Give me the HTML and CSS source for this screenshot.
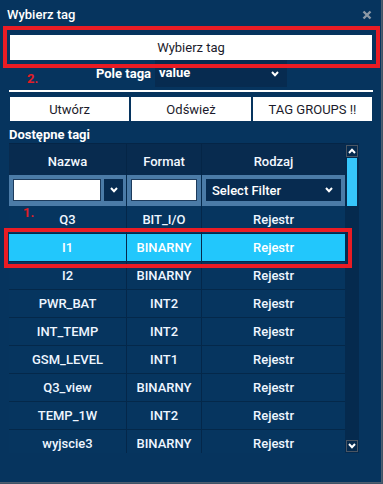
FILE: index.html
```html
<!DOCTYPE html>
<html lang="pl">
<head>
<meta charset="utf-8">
<title>Wybierz tag</title>
<link rel="stylesheet" href="styles.css">
</head>
<body>
<div class="window">
  <div class="titlebar">
    <span class="title">Wybierz tag</span>
    <svg class="close" width="10" height="10" viewBox="0 0 10 10"><path d="M1.5 1.5 L8.5 8.5 M8.5 1.5 L1.5 8.5" stroke="#8c99a6" stroke-width="2.4" fill="none"/></svg>
  </div>
  <div class="content">
    <button class="btn choose">Wybierz tag</button>
    <div class="field">
      <span class="field-label">Pole taga</span>
      <div class="select value-select"><span>value</span>
        <svg class="chev" width="8" height="6" viewBox="0 0 8 6"><path d="M1 1 L4 4.2 L7 1" stroke="#fff" stroke-width="2" fill="none"/></svg>
      </div>
    </div>
    <div class="rule"></div>
    <div class="actions">
      <button class="btn">Utwórz</button>
      <button class="btn">Odśwież</button>
      <button class="btn">TAG GROUPS !!</button>
    </div>
    <div class="section-label">Dostępne tagi</div>
    <div class="grid-wrap">
      <div class="grid">
        <div class="row head">
          <div class="cell">Nazwa</div>
          <div class="cell">Format</div>
          <div class="cell">Rodzaj</div>
        </div>
        <div class="row filter">
          <div class="cell combo">
            <div class="input wide"></div>
            <div class="combo-btn"><svg width="8" height="6" viewBox="0 0 8 6"><path d="M1 1 L4 4.2 L7 1" stroke="#fff" stroke-width="2" fill="none"/></svg></div>
          </div>
          <div class="cell"><div class="input"></div></div>
          <div class="cell">
            <div class="select filter-select"><span>Select Filter</span>
              <svg class="chev" width="8" height="6" viewBox="0 0 8 6"><path d="M1 1 L4 4.2 L7 1" stroke="#fff" stroke-width="2" fill="none"/></svg>
            </div>
          </div>
        </div>
        <div class="body">
          <div class="row data"><div class="cell">Q3</div><div class="cell">BIT_I/O</div><div class="cell">Rejestr</div></div>
          <div class="row data selected"><div class="cell">I1</div><div class="cell">BINARNY</div><div class="cell">Rejestr</div></div>
          <div class="row data"><div class="cell">I2</div><div class="cell">BINARNY</div><div class="cell">Rejestr</div></div>
          <div class="row data"><div class="cell">PWR_BAT</div><div class="cell">INT2</div><div class="cell">Rejestr</div></div>
          <div class="row data"><div class="cell">INT_TEMP</div><div class="cell">INT2</div><div class="cell">Rejestr</div></div>
          <div class="row data"><div class="cell">GSM_LEVEL</div><div class="cell">INT1</div><div class="cell">Rejestr</div></div>
          <div class="row data"><div class="cell">Q3_view</div><div class="cell">BINARNY</div><div class="cell">Rejestr</div></div>
          <div class="row data"><div class="cell">TEMP_1W</div><div class="cell">INT2</div><div class="cell">Rejestr</div></div>
          <div class="row data"><div class="cell">wyjscie3</div><div class="cell">BINARNY</div><div class="cell">Rejestr</div></div>
        </div>
      </div>
      <div class="scrollbar">
        <div class="sb-arrow"><svg width="8" height="6" viewBox="0 0 8 6"><path d="M1 5 L4 1.8 L7 5" stroke="#fff" stroke-width="2" fill="none"/></svg></div>
        <div class="sb-thumb"></div>
        <div class="sb-space"></div>
        <div class="sb-arrow"><svg width="8" height="6" viewBox="0 0 8 6"><path d="M1 1 L4 4.2 L7 1" stroke="#fff" stroke-width="2" fill="none"/></svg></div>
      </div>
    </div>
  </div>

  <div class="mark mark-top"></div>
  <div class="mark mark-row"></div>
  <span class="mark-num num-2">2.</span>
  <span class="mark-num num-1">1.</span>
</div>
</body>
</html>
```

FILE: styles.css
```css
* { box-sizing: border-box; }
html, body { margin: 0; padding: 0; background: #3f5366; }
body { font-family: Roboto, "Noto Sans", Arial, sans-serif; font-size: 13px; }

.window {
  position: relative;
  width: 382px;
  height: 483px;
  background: #06345e;
  border-right: 1px solid #4d5e70;
  border-bottom: 1px solid #4d5e70;
  overflow: hidden;
}

.titlebar {
  height: 26px;
  display: flex;
  align-items: flex-start;
  justify-content: space-between;
  padding: 7px 9px 0 7px;
}
.title { color: #fff; font-size: 13px; font-weight: 500; line-height: 15px; }
.close { margin-top: 3px; }

.content { padding: 0 9px 0 9px; }

.btn {
  font-family: Roboto, "Noto Sans", Arial, sans-serif;
  font-size: 13px;
  color: #1b1b2b;
  background: #fff;
  border: 0;
  padding: 0;
  margin: 0;
  line-height: 15px;
}
.choose {
  display: block;
  width: 362px;
  height: 25px;
  margin: 9px 0 0 1px;
}

.field {
  height: 27px;
  display: flex;
  justify-content: center;
  align-items: stretch;
  gap: 4px;
  padding-left: 2px;
}
.field-label { color: #fff; font-weight: 700; line-height: 15px; padding-top: 6px; }
.select {
  display: flex;
  align-items: center;
  justify-content: space-between;
  background: #072b50;
  color: #fff;
  font-weight: 700;
}
.value-select { width: 132px; padding: 0 8px 0 4px; }
.value-select span { margin-top: -2px; }

.rule { height: 2px; margin-top: 3px; width: 364px; background: #fff; }

.actions {
  margin: 5px 0 0 1px;
  width: 362px;
  height: 24px;
  display: grid;
  grid-template-columns: 119px 120px 119px;
  gap: 2px;
}
.actions .btn { height: 24px; }

.section-label {
  height: 22px;
  padding-top: 6px;
  color: #fff;
  font-weight: 700;
  line-height: 15px;
}

.grid-wrap {
  display: flex;
  width: 350px;
  height: 310px;
}
.grid { width: 336px; height: 310px; overflow: hidden; display: flex; flex-direction: column; }

.row {
  display: grid;
  grid-template-columns: 118px 75px 143px;
}
.cell {
  display: flex;
  align-items: center;
  justify-content: center;
  color: #eef6ff;
  font-weight: 700;
  border-right: 1px solid #04274a;
}
.cell:last-child { border-right: 0; }

.head { height: 32px; background: #082b4f; border-top: 1px solid #052546; flex: none; }
.head .cell { font-weight: 500; color: #f2f8ff; padding-top: 3px; border-right-color: #052546; }

.filter { height: 31px; background: #4b7ba7; flex: none; }
.filter .cell { padding: 4px 4px 5px; border-right-color: #062a4c; align-items: stretch; justify-content: flex-start; }
.combo { gap: 3px; }
.input { background: #fff; border: 1px solid #1d3b5c; height: 22px; flex: 1; }
.input.wide { flex: 0 0 88px; }
.combo-btn { flex: 0 0 19px; background: #072b50; display: flex; align-items: center; justify-content: center; }
.filter-select { flex: 1; padding: 0 8px 0 6px; height: 22px; font-weight: 500; }

.body { flex: 1; overflow: hidden; }
.data { height: 28px; border-bottom: 1px solid #04284a; background: #06355f; }
.data .cell { font-weight: 500; }
.selected { background: #22c7fc; }
.selected .cell { color: #fff; border-right-color: #05294b; }

.scrollbar {
  width: 14px;
  height: 310px;
  background: #052a4e;
  display: flex;
  flex-direction: column;
  align-items: center;
  padding: 2px 0 1px;
}
.sb-arrow {
  width: 12px;
  height: 12px;
  border: 1px solid #4a5563;
  display: flex;
  align-items: center;
  justify-content: center;
}
.sb-thumb { width: 10px; height: 48px; margin-top: 1px; background: #36c6fb; }
.sb-space { flex: 1; }

.mark {
  position: absolute;
  border: 4px solid #ea1c24;
  pointer-events: none;
}
.mark-top { left: 3px; top: 26px; width: 377px; height: 42px; }
.mark-row { left: 4px; top: 228px; width: 348px; height: 40px; }
.mark-num {
  position: absolute;
  color: #e21d26;
  font-weight: 700;
  font-size: 13px;
  line-height: 15px;
}
.num-2 { left: 27px; top: 71px; }
.num-1 { left: 23px; top: 205px; }
```
